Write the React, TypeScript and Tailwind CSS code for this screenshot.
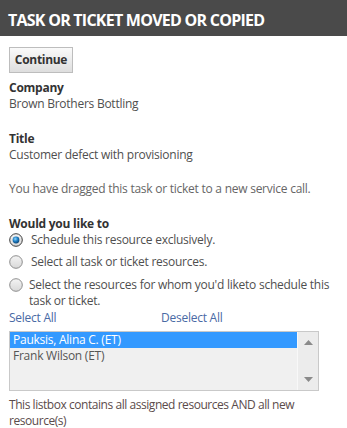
import React from "react";

function Radio({ checked }: { checked?: boolean }) {
  return (
    <svg width="14" height="14" viewBox="0 0 14 14" className="shrink-0">
      <defs>
        <linearGradient id="rg" x1="0" y1="0" x2="0" y2="1">
          <stop offset="0" stopColor="#f4f4f4" />
          <stop offset="1" stopColor="#d8d8d8" />
        </linearGradient>
        <radialGradient id="dot" cx="0.4" cy="0.35" r="0.7">
          <stop offset="0" stopColor="#8fd6ff" />
          <stop offset="0.5" stopColor="#1f7fc4" />
          <stop offset="1" stopColor="#0b3f6e" />
        </radialGradient>
      </defs>
      <circle cx="7" cy="7" r="6.3" fill="url(#rg)" stroke={checked ? "#3c3c3c" : "#8e8e8e"} strokeWidth="1" />
      {checked && <circle cx="7" cy="7" r="3.4" fill="url(#dot)" />}
    </svg>
  );
}

export default function App() {
  return (
    <div className="w-[347px] h-[428px] bg-white overflow-hidden" style={{ fontFamily: '"Open Sans", sans-serif' }}>
      <div className="h-[36px] bg-[#4a4a4a] flex items-center px-[8px] pt-[3px]">
        <span className="text-white font-bold text-[16px] tracking-[-0.75px]">TASK OR TICKET MOVED OR COPIED</span>
      </div>
      <div className="px-[9px] text-[12px] leading-[16px] tracking-[-0.25px] text-[#4f4f4f]">
        <button className="mt-[11px] h-[26px] w-[64px] border border-[#bdbdbd] bg-gradient-to-b from-[#fafafa] to-[#dedede] text-[#333] font-bold text-[12px] tracking-[-0.3px]">
          Continue
        </button>
        <div className="mt-[7px] font-bold text-[#333]">Company</div>
        <div>Brown Brothers Bottling</div>
        <div className="mt-[19px] font-bold text-[#333]">Title</div>
        <div>Customer defect with provisioning</div>
        <div className="mt-[18px] text-[#666]">You have dragged this task or ticket to a new service call.</div>
        <div className="mt-[19px] font-bold text-[#333]">Would you like to</div>
        <div className="mt-[0px] flex items-center h-[16px] gap-[8px]">
          <Radio checked />
          <span>Schedule this resource exclusively.</span>
        </div>
        <div className="mt-[6px] flex items-center h-[16px] gap-[8px]">
          <Radio />
          <span>Select all task or ticket resources.</span>
        </div>
        <div className="mt-[7px] flex items-start gap-[6px]">
          <div className="h-[16px] flex items-center"><Radio /></div>
          <span>Select the resources for whom you'd liketo schedule this task or ticket.</span>
        </div>
        <div className="mt-[1px] flex text-[#4a6aa5]">
          <span className="w-[152px]">Select All</span>
          <span>Deselect All</span>
        </div>
        <div className="mt-[5px] w-[310px] h-[60px] border border-[#c9c9c9] bg-[#f0f0f0] flex">
          <div className="flex-1 pt-[0px]">
            <div className="bg-[#3399ff] text-white h-[16px] leading-[16px] pl-[3px]">Pauksis, Alina C. (ET)</div>
            <div className="h-[16px] leading-[16px] pl-[3px] text-[#555]">Frank Wilson (ET)</div>
          </div>
          <div className="w-[21px] border-l border-[#f8f8f8] bg-[#ececec] flex flex-col items-center justify-between py-[8px]">
            <svg width="9" height="5" viewBox="0 0 9 5"><path d="M4.5 0 L9 5 L0 5 Z" fill="#8a8a8a" /></svg>
            <svg width="9" height="5" viewBox="0 0 9 5"><path d="M0 0 L9 0 L4.5 5 Z" fill="#8a8a8a" /></svg>
          </div>
        </div>
        <div className="mt-[6px] w-[310px] tracking-[-0.45px] text-[#5b4b4b]">This listbox contains all assigned resources AND all new resource(s)</div>
      </div>
    </div>
  );
}
